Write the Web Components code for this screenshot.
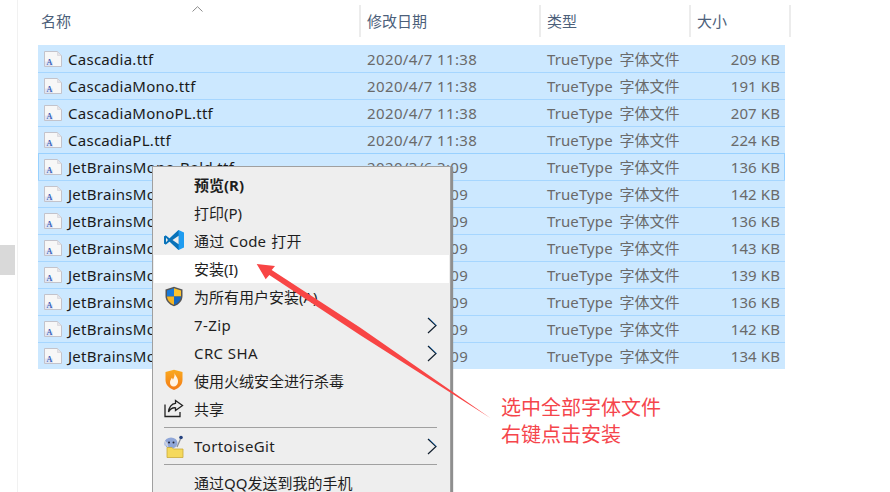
<!DOCTYPE html>
<html lang="zh-CN"><head><meta charset="utf-8"><title>Install fonts</title>
<style>
html,body{margin:0;padding:0;background:#fff;width:890px;height:492px;overflow:hidden}
body{font:15px "Noto Sans","Noto Sans CJK SC",sans-serif}
</style></head><body>
<font-window></font-window>
<script>
const shell=(el,html)=>{el.attachShadow({mode:'open'}).innerHTML=html;};
const ICONS={
 vscode:`<svg width="22" height="22" viewBox="0 0 22 22"><path d="M15.6 1 21 3.400V18.600L15.600 21 6.500 12.500 2.800 15.500 1 14.500V7.500L2.800 6.500 6.500 9.500Z" fill="#1f9cf0"/><path d="M15.600 1 6.500 9.500 2.800 6.500 1 7.500V14.500L2.800 15.500 6.500 12.500 15.600 21Z" fill="#0a72b8"/><path d="M15.600 6.800 9.500 11l6.100 4.200Z" fill="#eee"/><path d="M3 8.800 5 11 3 13.200Z" fill="#eee"/></svg>`,
 shield:`<svg width="20" height="21" viewBox="0 0 20 21"><path d="M10 .8 18.500 3.500V10C18.500 15 15 18.500 10 20.300 5 18.500 1.500 15 1.500 10V3.500Z" fill="#555"/><path d="M10 2.300V10.500H3V4.400Z" fill="#1979d8"/><path d="M10 2.300 17 4.400V10.500H10Z" fill="#fbc22e"/><path d="M3 10.500H10V18.800C6 17.300 3.300 14.500 3 10.500Z" fill="#f5b526"/><path d="M10 10.500H17C16.700 14.500 14 17.300 10 18.800Z" fill="#1468c4"/></svg>`,
 fire:`<svg width="20" height="22" viewBox="0 0 20 22"><defs><linearGradient id="g" x1="0" y1="0" x2="0" y2="1"><stop offset="0" stop-color="#f9a91f"/><stop offset="1" stop-color="#f47b17"/></linearGradient></defs><path d="M10 .8 18.500 3V11C18.500 16 14.500 19.500 10 21 5.500 19.500 1.500 16 1.500 11V3Z" fill="url(#g)"/><path d="M10.500 4C11.500 7.500 14.500 9 14 13 13.700 15.800 11.800 17.500 9.800 17.500 7.300 17.500 5.700 15.500 6 13 6.200 11.300 7.300 10.300 7.800 8.800 8.500 9.300 8.800 10 8.900 10.800 10 9 10.900 6.800 10.500 4Z" fill="#fff4e6"/></svg>`,
 share:`<svg width="20" height="19" viewBox="0 0 20 19" fill="none" stroke="#222" stroke-width="1.300"><path d="M1 5.500V17.500H16V13"/><path d="M11.500 1.500 18.500 6.500 11.500 11.500V8.800C8 8.500 6 10 4.500 13 4.800 8.500 7.500 4.700 11.500 4.400Z"/></svg>`,
 tortoise:`<svg width="22" height="23" viewBox="0 0 22 23"><ellipse cx="8" cy="8" rx="6.500" ry="5.500" fill="#8fa6d8"/><circle cx="3" cy="9" r="2" fill="#b9c6e6"/><circle cx="6" cy="7.500" r="1" fill="#223"/><circle cx="10.500" cy="7.500" r="1" fill="#223"/><circle cx="18" cy="2.500" r="1.800" fill="#23407e"/><path d="M17.500 4 14 12" stroke="#8a8f99" stroke-width="1.300"/><path d="M4 12.500H9L10.500 14H20V22.500H4Z" fill="#f5d95c" stroke="#c9a93a" stroke-width=".8"/><path d="M2 6 5 12" stroke="#d8d8d8" stroke-width="1"/></svg>`
};

class FontIcon extends HTMLElement{connectedCallback(){shell(this,`<style>:host{display:block;width:18px;height:16px;flex:none}</style>
<svg width="18" height="16" viewBox="0 0 18 16"><path d="M.5 .5H13.500L17.500 4.500V15.500H.5Z" fill="#f7f7f7" stroke="#c3c3cb"/><path d="M13.500 .5V4.500H17.500Z" fill="#e4e4e8" stroke="#d0d0d6" stroke-width=".6"/><path d="M1 10.500H9V15H1Z" fill="#dfe6f5"/><text x="2.600" y="14" font-family="Liberation Serif,serif" font-size="8" font-weight="700" fill="#3d62b8">A</text></svg>`);}}
customElements.define('font-icon',FontIcon);

class ColumnHeader extends HTMLElement{connectedCallback(){shell(this,`<style>
:host{display:grid;grid-template-columns:323px 180px 150px 100px;height:32px;margin-top:5px;color:#4c607a;font:15px "Noto Sans CJK SC",sans-serif;position:relative}
div{border-right:2px solid #ececec;box-sizing:border-box;display:flex;align-items:center;padding:0 0 2px 6px}
div:first-of-type{padding-left:3px}
svg{position:absolute;left:154px;top:1px}
</style><div>名称</div><div>修改日期</div><div>类型</div><div>大小</div>
<svg width="11" height="6" viewBox="0 0 11 6" fill="none" stroke="#8a8a8a"><path d="M.5 5.500 5.500 .7 10.500 5.500"/></svg>`);}}
customElements.define('column-header',ColumnHeader);

class FileRow extends HTMLElement{connectedCallback(){
 const a=k=>this.getAttribute(k);
 shell(this,`<style>
:host{display:grid;grid-template-columns:321px 180px 150px 96px;height:27px;box-sizing:border-box;background:#cce8ff;border-top:1px solid #a6d6ff;font:var(--f);color:#6a6a6a;align-items:center}
:host([first]){border-top-color:#cce8ff}
:host([focus]){border-top-color:#99d1ff;box-shadow:inset 1px 0 #99d1ff,inset -1px 0 #99d1ff}
.n{display:flex;align-items:center;gap:6px;padding-left:6px;color:#1a1a1a;white-space:nowrap;overflow:hidden;letter-spacing:.27px}
.d{padding-left:8px;letter-spacing:.38px}
.t{padding:0 0 2px 8px;white-space:nowrap;letter-spacing:.1px;word-spacing:2.8px}
.t b{font-weight:400;letter-spacing:0}
.s{text-align:right;padding:0 5px 0 0;letter-spacing:.1px}
</style><div class="n"><font-icon></font-icon><span>${a('name')}</span></div><div class="d">${a('date')}</div><div class="t">TrueType <b>字体文件</b></div><div class="s">${a('size')}</div>`);}}
customElements.define('file-row',FileRow);

class MenuItem extends HTMLElement{connectedCallback(){
 const ic=this.getAttribute('icon'),sub=this.hasAttribute('sub');
 shell(this,`<style>
:host{display:flex;align-items:center;box-sizing:border-box;height:28px;padding:0 12px 2px 4px;color:#1e1e1e;font:15px "Noto Sans","Noto Sans CJK SC",sans-serif;white-space:nowrap}
:host([hot]){background:#fff}
:host([bold]){font-weight:700}
:host([latin]){letter-spacing:.4px;padding-bottom:0}
:host([mixed]){letter-spacing:.15px;word-spacing:1px}
.i{width:32px;flex:none;display:flex;justify-content:center;align-items:center;margin-right:4px;height:22px}
.l{flex:1}
svg.c{display:block}
</style><span class="i">${ic?ICONS[ic]:''}</span><span class="l"><slot></slot></span>${sub?`<svg class="c" width="10" height="17" viewBox="0 0 10 17" fill="none"><path d="M1 1 9 8.500 1 16" stroke="#14202e" stroke-width="1.200"/><path d="M2 1 9.600 8.500" stroke="#2d7fc8" stroke-width=".7"/></svg>`:''}`);}}
customElements.define('menu-item',MenuItem);

class MenuSeparator extends HTMLElement{connectedCallback(){shell(this,`<style>
:host{display:flex;align-items:center;height:9px;padding:0 12px 0 10px}
i{display:block;flex:1;height:1px;background:#a0a0a0}</style><i></i>`);}}
customElements.define('menu-separator',MenuSeparator);

class ContextMenu extends HTMLElement{connectedCallback(){shell(this,`<style>
:host{position:absolute;left:152px;top:166px;width:295px;height:340px;box-sizing:content-box;background:#eee;border:1px solid #a0a0a0;padding:4px 1px 0;box-shadow:2px 1px 1px #8f8f8f;display:block}
</style><slot></slot>`);}}
customElements.define('context-menu',ContextMenu);

class AnnotationArrow extends HTMLElement{connectedCallback(){shell(this,`<style>
:host{position:absolute;left:0;top:0;display:block;width:890px;height:492px;pointer-events:none}
svg{position:absolute;left:0;top:0}
p{position:absolute;left:501px;top:393px;margin:0;color:#f5454b;font:20px/27px "Noto Sans CJK SC",sans-serif}
</style><svg width="890" height="492"><polygon fill="#f84545" points="256.700,264 275,266 271.700,270 360,327.500 490.700,418.300 360,335 269.300,275 265.700,279.300"/></svg><p>选中全部字体文件<br>右键点击安装</p>`);}}
customElements.define('annotation-arrow',AnnotationArrow);

class FontWindow extends HTMLElement{connectedCallback(){
 const rows=[['Cascadia.ttf','2020/4/7 11:38','209 KB'],['CascadiaMono.ttf','2020/4/7 11:38','191 KB'],['CascadiaMonoPL.ttf','2020/4/7 11:38','207 KB'],['CascadiaPL.ttf','2020/4/7 11:38','224 KB'],
 ['JetBrainsMono-Bold.ttf','2020/3/6 3:09','136 KB'],['JetBrainsMono-BoldItalic.ttf','2020/3/6 3:09','142 KB'],['JetBrainsMono-ExtraBold.ttf','2020/3/6 3:09','136 KB'],['JetBrainsMono-ExtraBoldItalic.ttf','2020/3/6 3:09','143 KB'],['JetBrainsMono-Italic.ttf','2020/3/6 3:09','139 KB'],['JetBrainsMono-Medium.ttf','2020/3/6 3:09','136 KB'],['JetBrainsMono-MediumItalic.ttf','2020/3/6 3:09','142 KB'],['JetBrainsMono-Regular.ttf','2020/3/6 3:09','134 KB']];
 shell(this,`<style>
:host{display:flex;position:relative;width:890px;height:492px;overflow:hidden;--f:15px "Noto Sans","Noto Sans CJK SC",sans-serif}
.gutter{width:17px;flex:none;padding-top:245px;box-sizing:border-box}
.gutter i{display:block;width:15px;height:30px;background:#d9d9d9}
.main{flex:1;border-left:1px solid #f1f1f1;padding-left:20px}
.rows{width:747px;margin-top:8px}
</style><div class="gutter"><i></i></div><div class="main"><column-header></column-header><div class="rows">
${rows.map((r,i)=>`<file-row name="${r[0]}" date="${r[1]}" size="${r[2]}"${i==0?' first':''}${i==4?' focus':''}></file-row>`).join('')}
</div></div>
<context-menu>
<menu-item bold>预览(R)</menu-item><menu-item>打印(P)</menu-item><menu-item icon="vscode" mixed>通过 Code 打开</menu-item><menu-item hot>安装(I)</menu-item><menu-item icon="shield">为所有用户安装(A)</menu-item><menu-item sub latin>7-Zip</menu-item><menu-item sub latin>CRC SHA</menu-item><menu-item icon="fire">使用火绒安全进行杀毒</menu-item><menu-item icon="share">共享</menu-item><menu-separator></menu-separator><menu-item icon="tortoise" sub latin>TortoiseGit</menu-item><menu-separator></menu-separator><menu-item>通过QQ发送到我的手机</menu-item>
</context-menu><annotation-arrow></annotation-arrow>`);}}
customElements.define('font-window',FontWindow);
</script></body></html>
